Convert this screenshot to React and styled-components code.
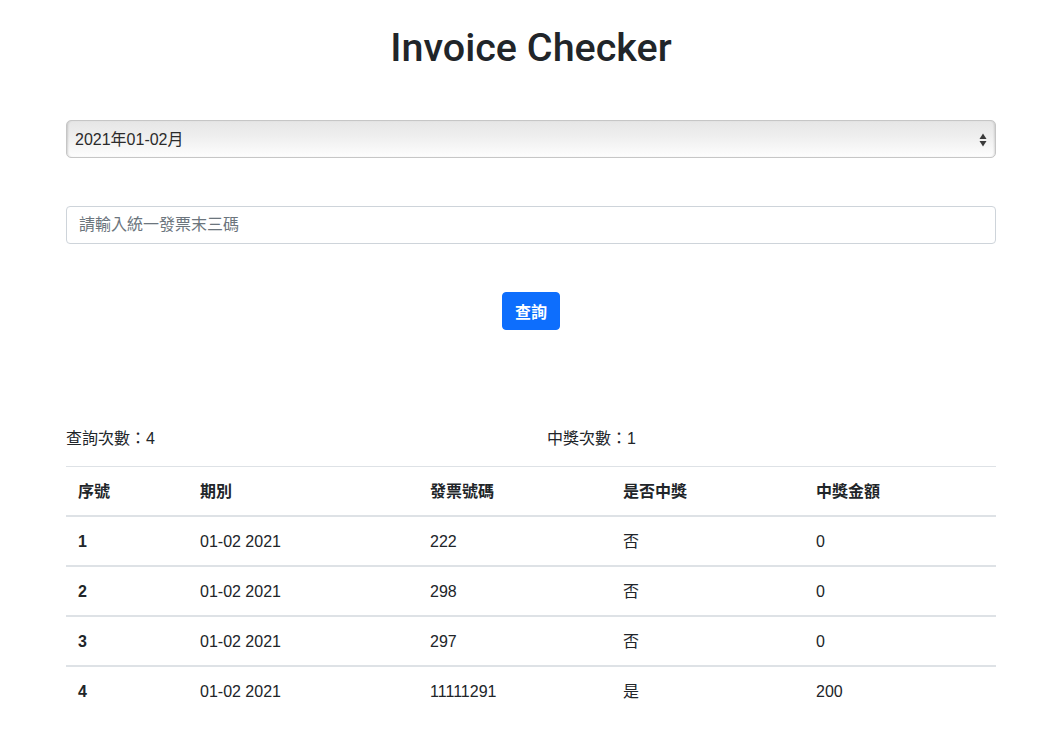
import React from "react";
import styled, { createGlobalStyle } from "styled-components";

const Global = createGlobalStyle`
  html, body { margin: 0; padding: 0; background: #fff; }
  body {
    font-family: "Liberation Sans", "Noto Sans CJK TC", Arial, sans-serif;
    font-size: 16px;
    line-height: 1.5;
    color: #212529;
  }
  * { box-sizing: border-box; }
`;

const Container = styled.div`
  width: 930px;
  margin-left: 66px;
  padding-top: 24px;
  padding-bottom: 40px;
`;

const Title = styled.h1`
  margin: 0 0 48px;
  text-align: center;
  font-family: Roboto, "Liberation Sans", sans-serif;
  font-size: 39.5px;
  line-height: 48px;
  font-weight: 500;
  color: #212529;
`;

const SelectBox = styled.div`
  position: relative;
  height: 38px;
  margin-bottom: 48px;
  border: 1px solid #c6c6c6;
  border-radius: 5px;
  background: linear-gradient(to bottom, #e6e6e6 0%, #eeeeee 40%, #fdfdfd 100%);
  box-shadow: inset 2px 0 2px -1px rgba(0, 0, 0, 0.15), inset -2px 0 2px -1px rgba(0, 0, 0, 0.12);
  display: flex;
  align-items: center;
  padding: 1px 8px 0 8px;
  font-size: 16px;
  color: #2b2b2b;
`;

const SelectText = styled.span`
  flex: 1;
`;

const Arrows = styled.svg`
  width: 8px;
  height: 14px;
  display: block;
`;

const Input = styled.input`
  display: block;
  width: 100%;
  height: 38px;
  margin: 0 0 48px;
  padding: 6px 12px;
  font-family: inherit;
  font-size: 16px;
  color: #212529;
  border: 1px solid #ced4da;
  border-radius: 4px;
  outline: none;
  &::placeholder { color: #6c757d; }
`;

const ButtonRow = styled.div`
  display: flex;
  justify-content: center;
  margin-bottom: 96px;
`;

const Button = styled.button`
  height: 38px;
  padding: 6px 12px;
  font-family: inherit;
  font-size: 16px;
  font-weight: 700;
  color: #fff;
  background: #0d6efd;
  border: 1px solid #0d6efd;
  border-radius: 4px;
`;

const Stats = styled.div`
  display: grid;
  grid-template-columns: 481px 1fr;
  margin-bottom: 15px;
  padding-top: 1px;
`;

const Table = styled.table`
  width: 100%;
  border-collapse: collapse;
  table-layout: fixed;
`;

const Th = styled.th`
  text-align: left;
  font-weight: 700;
  padding: 13px 12px 11px;
  line-height: 24px;
  border-top: 1px solid #dee2e6;
  border-bottom: 2px solid #dee2e6;
  width: ${(p) => p.$w}px;
`;

const Row = styled.tr`
  & + & > * { border-top: 2px solid #dee2e6; }
`;

const RowHead = styled.th`
  text-align: left;
  font-weight: 700;
  padding: 13px 12px 11px;
  line-height: 24px;
`;

const Td = styled.td`
  padding: 13px 12px 11px;
  line-height: 24px;
`;

const rows = [
  [1, "01-02 2021", "222", "否", "0"],
  [2, "01-02 2021", "298", "否", "0"],
  [3, "01-02 2021", "297", "否", "0"],
  [4, "01-02 2021", "11111291", "是", "200"],
];

export default function App() {
  return (
    <>
      <Global />
      <Container>
        <Title>Invoice Checker</Title>
        <SelectBox>
          <SelectText>2021年01-02月</SelectText>
          <Arrows viewBox="0 0 8 14">
            <path d="M4 0.5 L7.5 6 L0.5 6 Z" fill="#3a3a3a" />
            <path d="M4 13.5 L7.5 8 L0.5 8 Z" fill="#3a3a3a" />
          </Arrows>
        </SelectBox>
        <Input placeholder="請輸入統一發票末三碼" />
        <ButtonRow>
          <Button>查詢</Button>
        </ButtonRow>
        <Stats>
          <div>查詢次數：4</div>
          <div>中獎次數：1</div>
        </Stats>
        <Table>
          <thead>
            <tr>
              <Th $w={122}>序號</Th>
              <Th $w={230}>期別</Th>
              <Th $w={193}>發票號碼</Th>
              <Th $w={193}>是否中獎</Th>
              <Th $w={192}>中獎金額</Th>
            </tr>
          </thead>
          <tbody>
            {rows.map((r) => (
              <Row key={r[0]}>
                <RowHead>{r[0]}</RowHead>
                <Td>{r[1]}</Td>
                <Td>{r[2]}</Td>
                <Td>{r[3]}</Td>
                <Td>{r[4]}</Td>
              </Row>
            ))}
          </tbody>
        </Table>
      </Container>
    </>
  );
}
